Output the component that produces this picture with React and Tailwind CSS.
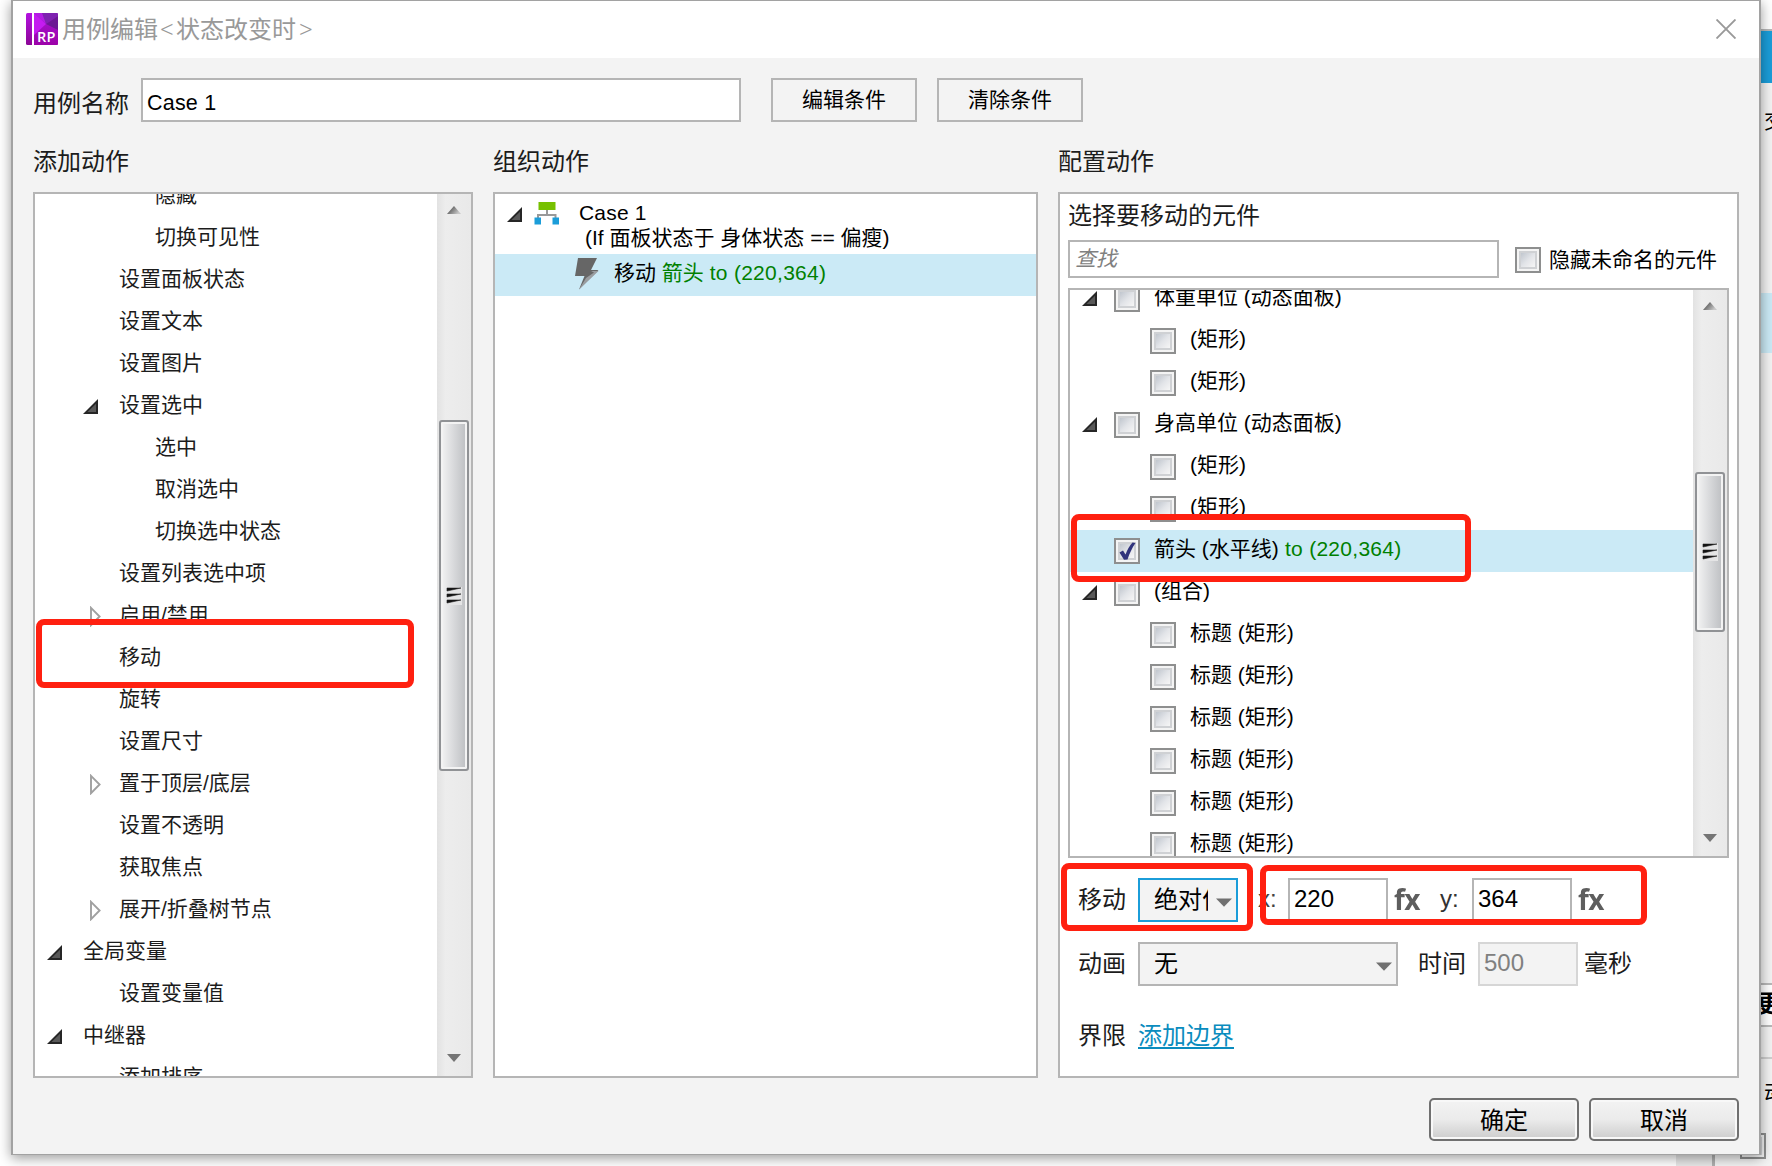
const FONT = "font-['Liberation_Sans','Noto_Sans_CJK_SC',sans-serif]";

const ACTIONS = [
  { level: 3, text: '隐藏' },
  { level: 3, text: '切换可见性' },
  { level: 2, text: '设置面板状态' },
  { level: 2, text: '设置文本' },
  { level: 2, text: '设置图片' },
  { level: 2, text: '设置选中', open: true },
  { level: 3, text: '选中' },
  { level: 3, text: '取消选中' },
  { level: 3, text: '切换选中状态' },
  { level: 2, text: '设置列表选中项' },
  { level: 2, text: '启用/禁用', closed: true },
  { level: 2, text: '移动' },
  { level: 2, text: '旋转' },
  { level: 2, text: '设置尺寸' },
  { level: 2, text: '置于顶层/底层', closed: true },
  { level: 2, text: '设置不透明' },
  { level: 2, text: '获取焦点' },
  { level: 2, text: '展开/折叠树节点', closed: true },
  { level: 1, text: '全局变量', open: true },
  { level: 2, text: '设置变量值' },
  { level: 1, text: '中继器', open: true },
  { level: 2, text: '添加排序' },
];

const WIDGETS = [
  { level: 1, text: '体重单位 (动态面板)', open: true },
  { level: 2, text: '(矩形)' },
  { level: 2, text: '(矩形)' },
  { level: 1, text: '身高单位 (动态面板)', open: true },
  { level: 2, text: '(矩形)' },
  { level: 2, text: '(矩形)' },
  { level: 1, text: '箭头 (水平线)', target: 'to (220,364)', checked: true },
  { level: 1, text: '(组合)', open: true },
  { level: 2, text: '标题 (矩形)' },
  { level: 2, text: '标题 (矩形)' },
  { level: 2, text: '标题 (矩形)' },
  { level: 2, text: '标题 (矩形)' },
  { level: 2, text: '标题 (矩形)' },
  { level: 2, text: '标题 (矩形)' },
];

const ACTION_INDENT = { 1: 'w-[12px]', 2: 'w-[48px]', 3: 'w-[84px]' };

function OpenArrow({ className = '' }) {
  return (
    <svg width="16" height="16" viewBox="0 0 16 16" className={`shrink-0 ${className}`}>
      <path d="M0 15 L15 0 V15 Z" fill="#262626" />
      <path d="M4.5 13 L13 4.8 V13 Z" fill="#595959" />
    </svg>
  );
}

function ClosedArrow() {
  return (
    <svg width="12" height="21" viewBox="0 0 12 21" className="mt-[3px] ml-[7px] shrink-0">
      <path d="M1 1.8 L9.6 10.5 L1 19.2 Z" fill="#fff" stroke="#a0a0a0" strokeWidth="1.9" />
    </svg>
  );
}

function Check({ checked, className = '' }) {
  return (
    <span className={`flex h-[26px] w-[26px] shrink-0 items-center justify-center border-2 border-[#8e8f8f] bg-[#f4f4f4] ${className}`}>
      <span className="flex h-[18px] w-[18px] border-2 border-[#cfd1d4] bg-linear-to-br from-[#c0c6ce] via-[#e2e4e8] to-[#f6f6f6]">
        {checked && (
          <svg width="18" height="20" viewBox="0 0 18 20" className="-mt-0.5 -ml-0.5 shrink-0 overflow-visible">
            <path d="M1.5 10.5 L5 8.5 L7.5 12.5 C9.5 7.5 12 3 14.5 0.5 L17.5 1 C14 6 11.5 11.5 9.5 17.5 L6 17.8 Z" fill="#31347c" />
          </svg>
        )}
      </span>
    </span>
  );
}

function ScrollBar({ before, size }) {
  return (
    <div className="flex h-full w-[34px] shrink-0 flex-col items-center bg-linear-to-r from-[#e2e2e2] via-[#ededed] via-25% to-[#e9e9e9]">
      <svg width="14" height="8" viewBox="0 0 14 8" className="mt-[12px] shrink-0">
        <defs>
          <linearGradient id="up" x1="0" x2="1" y1="0" y2="0.5">
            <stop offset="0.3" stopColor="#606060" />
            <stop offset="1" stopColor="#c8c8c8" />
          </linearGradient>
        </defs>
        <path d="M7 0 L14 8 H0 Z" fill="url(#up)" />
      </svg>
      <div className={`${before} shrink-0`} />
      <div className={`${size} flex w-[30px] shrink-0 items-center justify-center rounded-[3px] border-2 border-[#909295] bg-linear-to-r from-[#f4f4f4] via-[#dadbdd] via-45% to-[#bcbec1] shadow-[inset_0_0_0_2px_#f3f3f3]`}>
        <svg width="16" height="18" viewBox="0 0 16 18">
          <rect width="16" height="18" fill="#e4e4e5" />
          <path d="M1 1 H15 L1 4 Z M1 7 H15 L1 10 Z M1 13 H15 L1 16 Z" fill="#111" stroke="#222" strokeWidth="0.6" />
        </svg>
      </div>
      <div className="grow" />
      <svg width="14" height="8" viewBox="0 0 14 8" className="mb-[14px] shrink-0">
        <path d="M0 0 H14 L7 8 Z" fill="#757575" />
      </svg>
    </div>
  );
}

function DropArrow() {
  return (
    <svg width="16" height="9" viewBox="0 0 16 9" className="mt-1 shrink-0">
      <path d="M0 0.5 H16 L8 8.8 Z" fill="#707070" />
    </svg>
  );
}

function Fx() {
  return (
    <span className="ml-[6px] w-[28px] text-[28px] leading-[42px] font-bold text-[#5e5e5e] blur-[0.7px] font-['Open_Sans',sans-serif] tracking-[-0.5px]">fx</span>
  );
}

function Highlight({ className }) {
  return <div className={`pointer-events-none absolute z-10 rounded-[8px] border-[6px] border-[#ff2010] ${className}`} />;
}

function Backdrop() {
  return (
    <div className="flex h-full w-full">
      <div className="grow bg-white" />
      <div className="w-[36px] bg-[#e8e8e8]" />
      <div className="w-[3px] bg-[#b0b0b0]" />
      <div className="flex w-[57px] flex-col bg-[#f3f3f3]">
        <div className="h-[29px] bg-white" />
        <div className="h-[2px] bg-[#b8b8b8]" />
        <div className="h-[52px] bg-[#1b9dd9]" />
        <div className="flex h-[210px] flex-col items-end overflow-hidden pt-[23px]">
          <span className="w-[8px] overflow-hidden text-[21px] leading-[30px] whitespace-nowrap">交</span>
        </div>
        <div className="h-[60px] bg-[#cbeaf6]" />
        <div className="h-[630px]" />
        <div className="h-[44px] border-y-2 border-[#b8b8b8] bg-white">
          <span className="flex w-[57px] justify-end overflow-hidden text-[24px] leading-[38px] font-bold">
            <span className="w-[15px]">更</span>
          </span>
        </div>
        <div className="h-[32px] border-b-2 border-[#cfcfcf]" />
        <div className="flex h-[74px] justify-end overflow-hidden pt-[19px]">
          <span className="w-[8px] text-[21px] leading-[30px]">动</span>
        </div>
        <div className="flex pl-[25px]">
          <Check />
        </div>
      </div>
    </div>
  );
}

function TitleBar() {
  return (
    <div className="flex h-[57px] shrink-0 items-center bg-white pr-[23px] pl-[13px]">
      <svg width="32" height="32" viewBox="0 0 32 32" className="-mt-px shrink-0">
        <defs>
          <linearGradient id="logo" x1="0" x2="0" y1="0" y2="1">
            <stop offset="0" stopColor="#b312e0" />
            <stop offset="1" stopColor="#8c0596" />
          </linearGradient>
          <linearGradient id="face" x1="0" x2="0" y1="0" y2="1">
            <stop offset="0" stopColor="#a516d4" />
            <stop offset="1" stopColor="#9c02a8" />
          </linearGradient>
        </defs>
        <rect width="32" height="32" rx="1.5" fill="url(#logo)" />
        <path d="M8 0 H31 L32 1 V31 L31 32 H8 Z" fill="url(#face)" />
        <path d="M8 0 L20 11 L8 22 Z" fill="#c41cf0" />
        <path d="M8 0 H24 L20 11 Z" fill="#b41ce4" />
        <path d="M16 0 H31 L32 1 V3 L20 11 Z" fill="#7e22b0" />
        <path d="M32 3 V17 L20 11 Z" fill="#6b1894" />
        <rect x="6" width="2" height="32" fill="#fff" />
        <text x="11" y="28.7" fontFamily="Open Sans, sans-serif" fontSize="14.5" fontWeight="600" textLength="18.5" fill="#fff">RP</text>
      </svg>
      <span className="ml-[4px] grow text-[24px] leading-[36px] text-[#999]">
        用例编辑<span className="inline-block w-[18px] pl-[2px] font-['Noto_Sans',sans-serif] font-light">&lt;</span>状态改变时<span className="pl-[3px] font-['Noto_Sans',sans-serif] font-light">&gt;</span>
      </span>
      <svg width="20" height="20" viewBox="0 0 20 20" className="-mt-px shrink-0">
        <path d="M0.5 0.5 L19.5 19.5 M19.5 0.5 L0.5 19.5" stroke="#999" strokeWidth="1.9" />
      </svg>
    </div>
  );
}

function ActionPanel() {
  return (
    <div className="relative flex h-[886px] w-[440px] shrink-0 border-2 border-[#b5b5b5] bg-white">
      <div className="grow overflow-hidden">
        <div className="-mt-[20px]">
          {ACTIONS.map((a, i) => (
            <div key={i} className="flex h-[42px]">
              <div className={`${ACTION_INDENT[a.level]} shrink-0`} />
              <div className="w-[36px] shrink-0 pt-[15px]">
                {a.open && <OpenArrow />}
                {a.closed && <div className="-mt-[6px]"><ClosedArrow /></div>}
              </div>
              <span className="text-[21px] leading-[41px] whitespace-nowrap text-[#1c1c1c]">{a.text}</span>
            </div>
          ))}
        </div>
      </div>
      <ScrollBar before="h-[206px]" size="h-[351px]" />
      <Highlight className="top-[425px] left-px h-[69px] w-[378px]" />
    </div>
  );
}

function CasePanel() {
  return (
    <div className="h-[886px] w-[545px] shrink-0 border-2 border-[#b5b5b5] bg-white">
      <div className="flex h-[60px] pl-[12px]">
        <OpenArrow className="mt-[13px]" />
        <svg width="26" height="24" viewBox="0 0 26 24" className="mt-[8px] ml-[11px] shrink-0">
          <rect x="4.5" width="17" height="8" fill="#76c000" />
          <path d="M13 8 V13 M4 17 V13 H21.5 V17" fill="none" stroke="#999" strokeWidth="2" />
          <rect x="0.5" y="15.5" width="6.5" height="7" fill="#1b9dd9" />
          <rect x="18.5" y="15.5" width="6.5" height="7" fill="#1b9dd9" />
        </svg>
        <div className="ml-[19px] pt-[6px] text-[21px] leading-[25px] text-black">
          <div className="tracking-[0.2px]">Case 1</div>
          <div className="pl-[6px]">(If 面板状态于 身体状态 == 偏瘦)</div>
        </div>
      </div>
      <div className="flex h-[42px] bg-[#cbeaf6]">
        <svg width="26" height="34" viewBox="0 0 26 34" className="mt-[3px] ml-[79px] shrink-0">
          <path d="M4 1 H23 L17 13 H24.5 L5 32.5 L10.5 19 H1 Z" fill="#666" />
          <path d="M17 14 H24.5 L5 32.5 L12 21 L20 15.5 Z" fill="#9a9da0" />
        </svg>
        <span className="ml-[14px] text-[21px] leading-[38px] text-black">
          移动 <span className="text-[#008000]">箭头 <span className="tracking-[0.28px]">to (220,364)</span></span>
        </span>
      </div>
    </div>
  );
}

function WidgetTree() {
  return (
    <div className="relative mt-[10px] flex h-[570px] w-[661px] shrink-0 border-2 border-[#b5b5b5] bg-white">
      <div className="grow overflow-hidden">
        <div className="-mt-[12px]">
          {WIDGETS.map((w, i) => (
            <div key={i} className={`flex h-[42px] ${w.checked ? 'bg-[#cbeaf6]' : ''}`}>
              <div className={`${w.level === 1 ? 'w-[44px]' : 'w-[80px]'} shrink-0 pt-[13px] pl-[12px]`}>
                {w.open && <OpenArrow />}
              </div>
              <Check checked={w.checked} className="mt-[8px]" />
              <span className="ml-[14px] text-[21px] leading-[38px] whitespace-pre text-black">
                {w.text}
                {w.target && <span className="tracking-[0.28px] text-[#008000]"> {w.target}</span>}
              </span>
            </div>
          ))}
        </div>
      </div>
      <ScrollBar before="h-[162px]" size="h-[160px]" />
      <Highlight className="top-[224px] left-px h-[68px] w-[400px]" />
    </div>
  );
}

function ConfigPanel() {
  return (
    <div className="relative flex h-[886px] w-[681px] shrink-0 flex-col border-2 border-[#b5b5b5] bg-white pl-[8px]">
      <div className="h-[46px] shrink-0 text-[24px] leading-[43px] text-[#1c1c1c]">选择要移动的元件</div>
      <div className="flex h-[38px] shrink-0 items-center">
        <div className="h-[38px] w-[431px] border-2 border-[#b5b5b5] pl-[5px] text-[21px] leading-[33px] text-[#808080] italic">查找</div>
        <Check className="mt-[2px] ml-[16px]" />
        <span className="ml-[8px] text-[21px] leading-[38px] whitespace-nowrap text-black mt-[2px]">隐藏未命名的元件</span>
      </div>
      <WidgetTree />

      <div className="mt-[20px] flex h-[44px] shrink-0 pl-[9px] text-[24px] leading-[43px] text-[#1c1c1c]">
        <span className="w-[61px] pl-px">移动</span>
        <div className="flex h-[44px] w-[100px] items-center border-2 border-[#1b9dd9] bg-[#f3f3f3] pl-[14px] leading-[38px] text-black">
          <span className="mr-[8px] w-[54px] overflow-hidden whitespace-nowrap">绝对位置</span>
          <DropArrow />
        </div>
        <span className="ml-[20px] w-[30px] leading-[42px] text-[#444]">x:</span>
        <div className="h-[44px] w-[100px] border-2 border-[#b5b5b5] pl-[4px] leading-[38px] text-black">220</div>
        <Fx />
        <span className="ml-[18px] w-[32px] leading-[42px] text-[#333]">y:</span>
        <div className="h-[44px] w-[100px] border-2 border-[#b5b5b5] pl-[4px] leading-[38px] text-black">364</div>
        <Fx />
      </div>

      <div className="mt-[20px] flex h-[44px] shrink-0 pl-[9px] text-[24px] leading-[43px] text-[#1c1c1c]">
        <span className="w-[61px] pl-px">动画</span>
        <div className="flex h-[44px] w-[260px] items-center justify-between border-2 border-[#b5b5b5] bg-[#f3f3f3] pr-[4px] pl-[14px] leading-[40px] text-black">
          <span>无</span>
          <DropArrow />
        </div>
        <span className="ml-[20px] w-[60px]">时间</span>
        <div className="h-[44px] w-[100px] border-2 border-[#d6d6d6] bg-[#f3f3f3] pl-[4px] leading-[38px] text-[#808080]">500</div>
        <span className="ml-[6px]">毫秒</span>
      </div>

      <div className="mt-[29px] flex h-[42px] shrink-0 items-center pl-[9px] text-[24px] leading-[42px] text-[#1c1c1c]">
        <span className="w-[61px] pl-px">界限</span>
        <span className="h-[26px] border-b-2 border-[#0a8cbe] leading-[26px] -mt-px text-[#0a8cbe]">添加边界</span>
      </div>

      <Highlight className="top-[669px] left-px h-[68px] w-[192px]" />
      <Highlight className="top-[671px] left-[200px] h-[60px] w-[387px]" />
    </div>
  );
}

function PushButton({ children }) {
  return (
    <div className="h-[43px] w-[150px] rounded-[5px] border-2 border-[#707070] bg-linear-to-b from-[#f3f3f3] from-0% via-[#ebebeb] via-50% to-[#cdcdcd] text-center text-[24px] leading-[41px] text-black shadow-[inset_0_0_0_2px_#f8f8f8]">
      {children}
    </div>
  );
}

export default function App() {
  return (
    <div className={`relative h-[1166px] w-[1772px] overflow-hidden bg-white ${FONT}`}>
      <Backdrop />
      <div className="absolute top-0 left-[11px] flex h-[1155px] w-[1750px] flex-col border-x-2 border-y border-[#a2a2a2] bg-[#f3f3f3] shadow-[0_3px_12px_rgba(0,0,0,0.4)]">
        <TitleBar />
        <div className="flex grow flex-col pt-[20px] pl-[20px]">
          <div className="flex h-[44px] shrink-0">
            <span className="w-[108px] text-[24px] leading-[51px] text-[#1c1c1c]">用例名称</span>
            <div className="h-[44px] w-[600px] border-2 border-[#b5b5b5] bg-white pl-[4px] text-[21.5px] leading-[46px] tracking-[0.2px] text-black">Case 1</div>
            <div className="ml-[30px] h-[44px] w-[146px] border-2 border-[#b5b5b5] text-center text-[21px] leading-[40px] text-black">编辑条件</div>
            <div className="ml-[20px] h-[44px] w-[146px] border-2 border-[#b5b5b5] text-center text-[21px] leading-[40px] text-black">清除条件</div>
          </div>
          <div className="flex h-[70px] shrink-0 pt-[18px] text-[24px] leading-[43px] text-[#1c1c1c]">
            <span className="w-[460px]">添加动作</span>
            <span className="w-[565px]">组织动作</span>
            <span>配置动作</span>
          </div>
          <div className="flex shrink-0 gap-[20px]">
            <ActionPanel />
            <CasePanel />
            <ConfigPanel />
          </div>
          <div className="mt-[20px] flex justify-end gap-[10px] pr-[20px]">
            <PushButton>确定</PushButton>
            <PushButton>取消</PushButton>
          </div>
        </div>
      </div>
    </div>
  );
}
